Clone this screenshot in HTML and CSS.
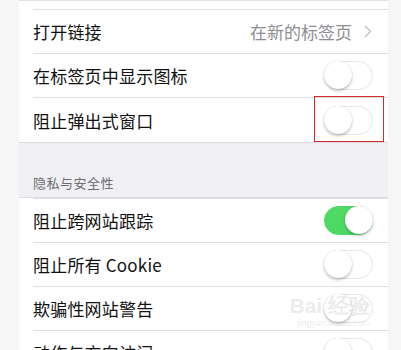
FILE: index.html
```html
<!DOCTYPE html>
<html lang="zh">
<head>
<meta charset="utf-8">
<link rel="stylesheet" href="styles.css">
</head>
<body>
<div class="screen">
  <div class="group top">
    <div class="prev"></div>
    <div class="row">
      <span class="label">打开链接</span>
      <span class="value">在新的标签页
        <svg class="chev" width="8" height="13" viewBox="0 0 8 13"><polyline points="1,1 6.5,6.5 1,12" fill="none" stroke="#c4c4c9" stroke-width="1.5"/></svg>
      </span>
    </div>
    <div class="row">
      <span class="label">在标签页中显示图标</span>
      <span class="toggle"></span>
    </div>
    <div class="row last">
      <span class="label">阻止弹出式窗口</span>
      <span class="toggle"></span>
      <span class="mark"></span>
    </div>
  </div>
  <div class="header">隐私与安全性</div>
  <div class="group">
    <div class="row">
      <span class="label">阻止跨网站跟踪</span>
      <span class="toggle on"></span>
    </div>
    <div class="row">
      <span class="label">阻止所有 Cookie</span>
      <span class="toggle"></span>
    </div>
    <div class="row">
      <span class="label">欺骗性网站警告</span>
      <span class="toggle"></span>
      <span class="wm"><span class="wm-big">Bai 经验</span><span class="wm-small">jingyan.baidu.com</span></span>
    </div>
    <div class="row">
      <span class="label">动作与方向访问</span>
      <span class="toggle"></span>
    </div>
  </div>
</div>
</body>
</html>
```
FILE: styles.css
```css
html, body {
  margin: 0;
  padding: 0;
  height: 350px;
  overflow: hidden;
  background: #f6f6f7;
}
body {
  font-family: "Noto Sans CJK SC", "Noto Sans", sans-serif;
  color: #111;
}
.screen {
  margin-left: 19px;
  width: 369px;
  background: #efeff4;
}
.group {
  background: #fff;
  border-top: 1px solid #dcdce0;
}
.group.top {
  border-top: none;
  border-bottom: 1px solid #dcdce0;
}
.prev {
  height: 8px;
  border-top: 1px solid #e2e2e6;
}
.row {
  position: relative;
  display: flex;
  align-items: center;
  justify-content: space-between;
  height: 44px;
  margin-left: 14px;
  padding-right: 15px;
  border-top: 1px solid #e0e0e4;
  box-sizing: border-box;
}
.row.last {
  height: 45px;
}
.label {
  font-size: 17px;
  letter-spacing: 0.2px;
}
.value {
  display: flex;
  align-items: center;
  gap: 12px;
  font-size: 17px;
  color: #8e8e93;
  margin-right: 1px;
}
.chev {
  display: block;
}
.toggle {
  position: relative;
  width: 49px;
  height: 29px;
  border-radius: 15px;
  box-sizing: border-box;
  border: 1.5px solid #e6e6ea;
  background: #fff;
}
.toggle::after {
  content: "";
  position: absolute;
  left: -1px;
  top: -1px;
  width: 28px;
  height: 28px;
  border-radius: 50%;
  background: #fff;
  box-shadow: 0 2px 3px rgba(0,0,0,0.22), 0 0 1px rgba(0,0,0,0.2);
}
.toggle.on {
  background: #4cd964;
  border-color: #4cd964;
}
.toggle.on::after {
  left: auto;
  right: -1px;
}
.header {
  height: 54px;
  box-sizing: border-box;
  padding: 30px 0 0 14px;
  font-size: 13px;
  color: #6d6d72;
  letter-spacing: 0.5px;
}
.mark {
  position: absolute;
  right: 4px;
  top: -2px;
  width: 70px;
  height: 46px;
  box-sizing: border-box;
  border: 1px solid #d42a2a;
}
.wm {
  position: absolute;
  right: 18px;
  top: 8px;
  display: flex;
  flex-direction: column;
  align-items: flex-end;
  color: rgba(205,205,205,0.4);
  pointer-events: none;
}
.wm-big {
  font-family: "Liberation Sans", sans-serif;
  font-size: 21px;
  font-weight: bold;
  line-height: 22px;
}
.wm-small {
  font-family: "Liberation Sans", sans-serif;
  font-size: 9px;
  line-height: 12px;
}
```
